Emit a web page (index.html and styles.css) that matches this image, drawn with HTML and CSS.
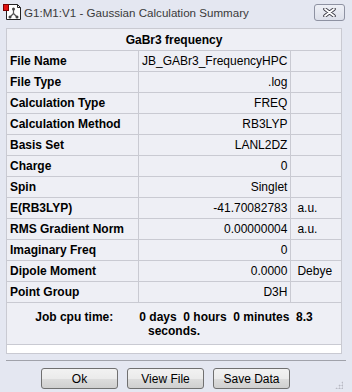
FILE: index.html
```html
<!DOCTYPE html>
<html lang="en">
<head>
    <meta charset="UTF-8">
    <title>G1:M1:V1 - Gaussian Calculation Summary</title>
    <link rel="stylesheet" href="styles.css">
</head>
<body>
    <div class="window">
        <div class="titlebar">
            <svg class="app-icon" width="18" height="16" viewBox="0 0 18 16">
                <path d="M3.5 0.5 H14.5 L17.5 3.5 V15.5 H3.5 Z" fill="#fff" stroke="#222"/>
                <path d="M14.5 0.5 V3.5 H17.5" fill="none" stroke="#222"/>
                <g stroke="#555" stroke-width="1.2" fill="none">
                    <path d="M10.5 5 V9.5 M10.5 9.5 L7 13 M10.5 9.5 L14 13"/>
                </g>
                <circle cx="10.5" cy="5" r="1.5" fill="#444"/>
                <circle cx="7" cy="13" r="1.5" fill="#444"/>
                <circle cx="14" cy="13" r="1.5" fill="#444"/>
                <rect x="0.5" y="0.5" width="5" height="6" fill="#e01010" stroke="#7a0000"/>
            </svg>
            <span class="title">G1:M1:V1 - Gaussian Calculation Summary</span>
            <button class="close-btn" type="button">
                <svg width="13" height="9" viewBox="0 0 13 9">
                    <path d="M2 1 L11 8 M11 1 L2 8" stroke="#3c3c46" stroke-width="3.6" stroke-linecap="round"/>
                    <path d="M2 1 L11 8 M11 1 L2 8" stroke="#fff" stroke-width="1.8" stroke-linecap="round"/>
                </svg>
            </button>
        </div>

        <table class="summary">
            <tr class="heading">
                <td colspan="3">GaBr3 frequency</td>
            </tr>
            <tr><td class="label">File Name</td><td class="value">JB_GABr3_FrequencyHPC</td><td class="unit"></td></tr>
            <tr><td class="label">File Type</td><td class="value">.log</td><td class="unit"></td></tr>
            <tr><td class="label">Calculation Type</td><td class="value">FREQ</td><td class="unit"></td></tr>
            <tr><td class="label">Calculation Method</td><td class="value">RB3LYP</td><td class="unit"></td></tr>
            <tr><td class="label">Basis Set</td><td class="value">LANL2DZ</td><td class="unit"></td></tr>
            <tr><td class="label">Charge</td><td class="value">0</td><td class="unit"></td></tr>
            <tr><td class="label">Spin</td><td class="value">Singlet</td><td class="unit"></td></tr>
            <tr><td class="label">E(RB3LYP)</td><td class="value">-41.70082783</td><td class="unit">a.u.</td></tr>
            <tr><td class="label">RMS Gradient Norm</td><td class="value">0.00000004</td><td class="unit">a.u.</td></tr>
            <tr><td class="label">Imaginary Freq</td><td class="value">0</td><td class="unit"></td></tr>
            <tr><td class="label">Dipole Moment</td><td class="value">0.0000</td><td class="unit">Debye</td></tr>
            <tr><td class="label">Point Group</td><td class="value">D3H</td><td class="unit"></td></tr>
            <tr class="cpu">
                <td colspan="3">
                    <div class="cpu-line">Job cpu time:<span class="cpu-gap"></span>0 days  0 hours  0 minutes  8.3</div>
                    <div class="cpu-line">seconds.</div>
                </td>
            </tr>
            <tr class="blank"><td colspan="3"></td></tr>
        </table>

        <div class="separator"></div>

        <div class="buttons">
            <button type="button">Ok</button>
            <button type="button">View File</button>
            <button type="button">Save Data</button>
        </div>

        <div class="grip"></div>
    </div>
</body>
</html>
```

FILE: styles.css
```css
* {
    margin: 0;
    padding: 0;
    box-sizing: border-box;
}

body {
    width: 352px;
    height: 392px;
    overflow: hidden;
    background: #e4e7f1;
    font-family: 'Liberation Sans', Arial, sans-serif;
    font-size: 12px;
    color: #000;
}

.window {
    position: relative;
    width: 352px;
    height: 392px;
}

/* Title bar */
.titlebar {
    display: flex;
    align-items: flex-start;
    height: 28px;
    padding: 4px 7px 0 3px;
}

.app-icon {
    flex: none;
    margin-right: 3px;
}

.title {
    flex: 1;
    font-family: 'Liberation Sans', sans-serif;
    font-size: 11.6px;
    line-height: 17px;
    color: #3a3a3a;
    white-space: nowrap;
}

.close-btn {
    flex: none;
    width: 31px;
    height: 17px;
    display: flex;
    align-items: center;
    justify-content: center;
    border: 1px solid #8e92a2;
    border-radius: 3px;
    background: linear-gradient(#eef0f6, #dde0ea);
}

/* Summary table */
.summary {
    width: 336px;
    margin: 0 6px;
    border-collapse: collapse;
    border: 1px solid #8a8c94;
    background: #eeeff5;
}

.summary td {
    height: 21px;
    padding: 0 3px;
    border: 1px solid #c9cad2;
    white-space: nowrap;
    line-height: 14px;
}

.heading td {
    height: 22px;
    text-align: center;
    font-weight: bold;
}

.summary .label {
    width: 132px;
    font-weight: bold;
}

.summary .value {
    width: 146px;
    text-align: right;
}

.summary .unit {
    padding-left: 6px;
}

.cpu td {
    height: 42px;
    text-align: center;
    font-weight: bold;
}

.cpu-line {
    white-space: pre;
}

.cpu-gap {
    display: inline-block;
    width: 26px;
}

.blank td {
    height: 9px;
    background: #fff;
}

.separator {
    margin: 6px 6px 0 6px;
    height: 1px;
    background: #a0a2aa;
}

/* Buttons */
.buttons {
    display: flex;
    gap: 9px;
    padding: 7px 0 0 41px;
}

.buttons button {
    width: 77px;
    height: 21px;
    font-family: inherit;
    font-size: 12px;
    color: #000;
    border: 1px solid #707070;
    border-radius: 3px;
    background: linear-gradient(#f2f2f2 0%, #ebebeb 50%, #dddddd 51%, #cfcfcf 100%);
}

.grip {
    position: absolute;
    right: 9px;
    bottom: 3px;
    width: 8px;
    height: 8px;
    background:
        radial-gradient(circle, #b8bac4 0.8px, transparent 1.2px) 0 0 / 3px 3px;
    clip-path: polygon(100% 0, 100% 100%, 0 100%);
}
```
